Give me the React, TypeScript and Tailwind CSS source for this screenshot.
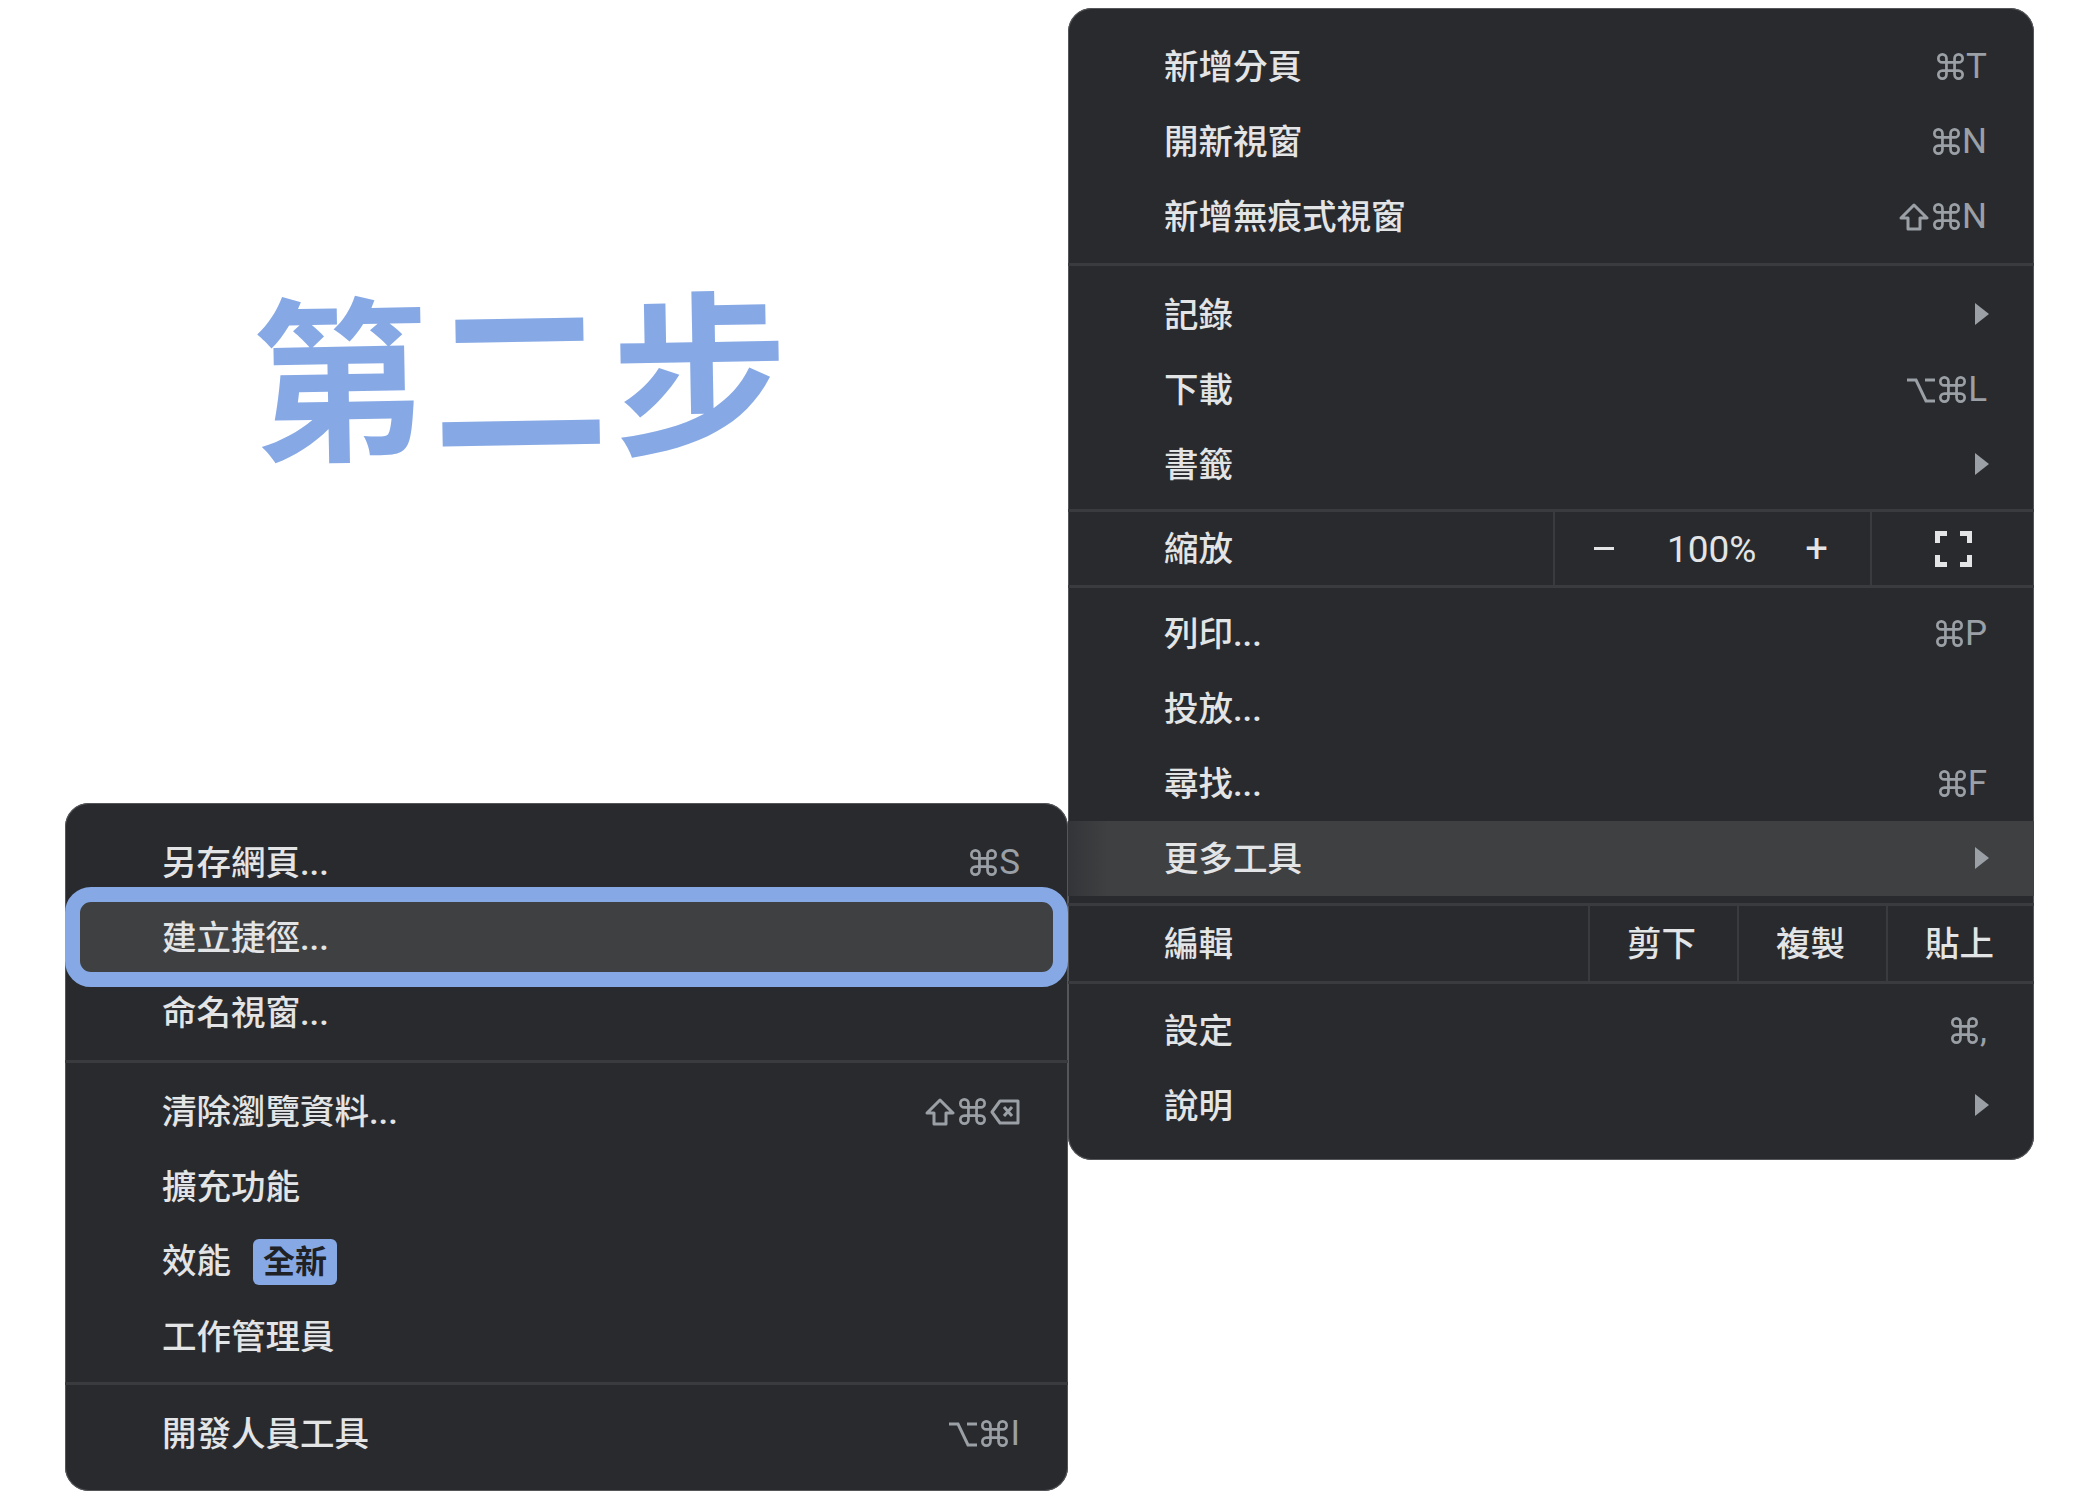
import React from 'react';

const CmdIcon = () => (
  <svg viewBox="2 2 20 20" className="w-[27px] h-[27px]" fill="none" stroke="currentColor" strokeWidth="2">
    <path d="M15 6v12a3 3 0 1 0 3-3H6a3 3 0 1 0 3 3V6a3 3 0 1 0-3 3h12a3 3 0 1 0-3-3" />
  </svg>
);

const ShiftIcon = () => (
  <svg viewBox="0 0 30 28" className="w-[30px] h-[28px]" fill="none" stroke="currentColor" strokeWidth="3" strokeLinejoin="round">
    <path d="M15 2 L28 15 H21 V26 H9 V15 H2 Z" />
  </svg>
);

const OptionIcon = () => (
  <svg viewBox="0 0 28 26" className="w-[28px] h-[26px]" fill="none" stroke="currentColor" strokeWidth="3">
    <path d="M0 3 H9 L19 24 H28 M18 3 H28" />
  </svg>
);

const DeleteIcon = () => (
  <svg viewBox="0 0 30 26" className="w-[30px] h-[26px]" fill="none" stroke="currentColor" strokeWidth="3" strokeLinejoin="round">
    <path d="M10 2 H28 V24 H10 L2 13 Z M14 8 L22 17 M22 8 L14 17" />
  </svg>
);

function Shortcut({ keys, text }: { keys: string; text?: string }) {
  return (
    <span className="flex items-center gap-[4px] text-[35px] leading-none font-normal text-[#9aa0a6]">
      {keys.includes('s') && <ShiftIcon />}
      {keys.includes('o') && <OptionIcon />}
      {keys.includes('c') && <CmdIcon />}
      {keys.includes('d') && <DeleteIcon />}
      {text && <span className="-ml-[2px]">{text}</span>}
    </span>
  );
}

const Arrow = () => (
  <svg viewBox="0 0 14 22" className="w-[14px] h-[22px] -mr-[2px] -mt-[2px]" fill="#9aa0a6">
    <path d="M0 0 L14 11 L0 22 Z" />
  </svg>
);

const Divider = () => <div className="h-[3px] bg-[#3a3b3e]" />;

function Row({ label, children, hover }: { label: string; children?: React.ReactNode; hover?: boolean }) {
  return (
    <div
      className={`flex items-center justify-between h-[75px] pl-[96px] pr-[47px] ${
        hover ? 'bg-[linear-gradient(90deg,#343538,#3f4042_40px)]' : ''
      }`}
    >
      <span className="pt-[2px]">{label}</span>
      {children}
    </div>
  );
}

function LeftRow({ label, children }: { label: string; children?: React.ReactNode }) {
  return (
    <div className="flex items-center justify-between h-[75px] pl-[97px] pr-[48px]">
      <span className="pt-[2px]">{label}</span>
      {children}
    </div>
  );
}

const menuText =
  "bg-[#292a2d] text-[#e3e4e6] text-[34.5px] leading-none font-medium font-['Roboto','Noto_Sans_CJK_TC',sans-serif] shadow-[inset_0_0_0_1px_#55565a]";

export default function App() {
  return (
    <div className="flex w-[2100px] h-[1500px] bg-white overflow-hidden">
      <div className="flex flex-col w-[1068px] pl-[65px] pb-[9px]">
        <div className="flex flex-1 pl-[187px] pt-[280px]">
          <h1 className="-rotate-1 h-fit text-[176px] leading-none tracking-[4px] font-bold text-[#86a9e6] font-['Noto_Sans_CJK_TC',sans-serif]">
            第二步
          </h1>
        </div>
        <div className={`${menuText} rounded-[24px] pt-[22px] pb-[20px]`}>
          <LeftRow label="另存網頁...">
            <Shortcut keys="c" text="S" />
          </LeftRow>
          <div className="relative">
            <div className="absolute -top-[13px] -bottom-[12px] left-0 right-0 rounded-[26px] border-[15px] border-[#86a9e6] bg-[#3f4042]" />
            <div className="relative">
              <LeftRow label="建立捷徑..." />
            </div>
          </div>
          <LeftRow label="命名視窗..." />
          <div className="mt-[10px] mb-[11px]">
            <Divider />
          </div>
          <LeftRow label="清除瀏覽資料...">
            <Shortcut keys="scd" />
          </LeftRow>
          <LeftRow label="擴充功能" />
          <div className="flex items-center h-[75px] pl-[97px]">
            <span>效能</span>
            <span className="flex items-center justify-center ml-[22px] w-[84px] h-[46px] rounded-[6px] bg-[#86a9e6] text-[#202124] text-[32px] font-bold">
              全新
            </span>
          </div>
          <LeftRow label="工作管理員" />
          <div className="mt-[8px] mb-[11px]">
            <Divider />
          </div>
          <LeftRow label="開發人員工具">
            <Shortcut keys="oc" text="I" />
          </LeftRow>
        </div>
      </div>

      <div className="w-[966px] pt-[8px]">
        <div className={`${menuText} rounded-[24px] pt-[21px] pb-[17px]`}>
          <Row label="新增分頁">
            <Shortcut keys="c" text="T" />
          </Row>
          <Row label="開新視窗">
            <Shortcut keys="c" text="N" />
          </Row>
          <Row label="新增無痕式視窗">
            <Shortcut keys="sc" text="N" />
          </Row>
          <div className="mt-[9px] mb-[11px]">
            <Divider />
          </div>
          <Row label="記錄">
            <Arrow />
          </Row>
          <Row label="下載">
            <Shortcut keys="oc" text="L" />
          </Row>
          <Row label="書籤">
            <Arrow />
          </Row>
          <div className="mt-[7px]">
            <Divider />
          </div>
          <div className="flex items-stretch h-[73px]">
            <div className="flex items-center w-[485px] pl-[96px] pt-[2px]">縮放</div>
            <div className="flex items-center justify-between w-[319px] pl-[39px] pr-[42px] border-x-2 border-[#3a3b3e] text-[37px] font-normal">
              <span className="w-[20px] h-[3px] bg-[#e3e4e6]" />
              <span className="pt-[1px] ml-[4px]">100%</span>
              <span className="text-[40px] leading-none">+</span>
            </div>
            <div className="flex flex-1 items-center pl-[63px]">
              <svg viewBox="0 0 37 36" className="w-[37px] h-[36px]" fill="none" stroke="#e3e4e6" strokeWidth="5">
                <path d="M2.5 12 V2.5 H12 M25 2.5 H34.5 V12 M34.5 24 V33.5 H25 M12 33.5 H2.5 V24" />
              </svg>
            </div>
          </div>
          <div className="mb-[8px]">
            <Divider />
          </div>
          <Row label="列印...">
            <Shortcut keys="c" text="P" />
          </Row>
          <Row label="投放..." />
          <Row label="尋找...">
            <Shortcut keys="c" text="F" />
          </Row>
          <Row label="更多工具" hover>
            <Arrow />
          </Row>
          <div className="mt-[7px]">
            <Divider />
          </div>
          <div className="flex items-stretch h-[75px]">
            <div className="flex flex-1 items-center pl-[96px] pt-[2px]">編輯</div>
            <div className="flex items-center justify-center w-[149px] pr-[4px] pt-[2px] border-l-2 border-[#3a3b3e]">剪下</div>
            <div className="flex items-center justify-center w-[149px] pr-[4px] pt-[2px] border-l-2 border-[#3a3b3e]">複製</div>
            <div className="flex items-center justify-center w-[148px] pr-[3px] pt-[2px] border-l-2 border-[#3a3b3e]">貼上</div>
          </div>
          <div className="mb-[9px]">
            <Divider />
          </div>
          <Row label="設定">
            <Shortcut keys="c" text="," />
          </Row>
          <Row label="說明">
            <Arrow />
          </Row>
        </div>
      </div>
    </div>
  );
}
